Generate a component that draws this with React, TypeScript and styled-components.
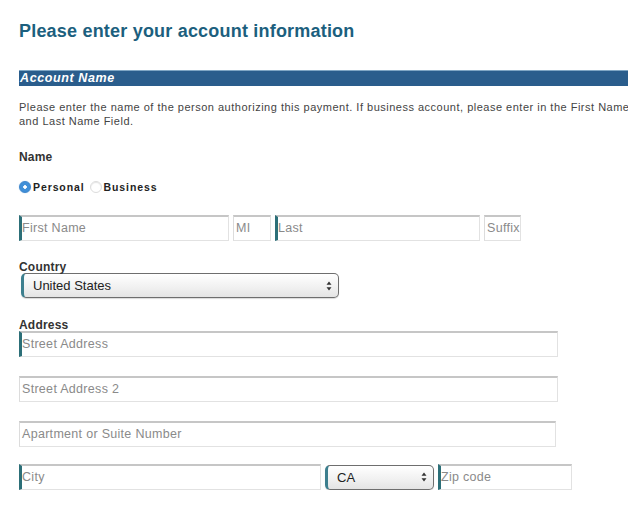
import styled, { createGlobalStyle } from 'styled-components';

const Global = createGlobalStyle`
  html, body {
    margin: 0;
    padding: 0;
    background: #ffffff;
    overflow: hidden;
  }
  body {
    font-family: "Liberation Sans", Arial, sans-serif;
    color: #333333;
  }
`;

const Page = styled.div`
  width: 630px;
  padding: 21px 0 0 19px;
`;

const Heading = styled.h1`
  margin: 0 0 28px;
  height: 21px;
  font-size: 18px;
  line-height: 21px;
  font-weight: bold;
  color: #1c5f7e;
  letter-spacing: 0.2px;
`;

const SectionBar = styled.div`
  height: 15px;
  background: #2a5d8c;
  border-top: 1px solid #7fa6c4;
  color: #ffffff;
  font-size: 12.5px;
  font-weight: bold;
  font-style: italic;
  letter-spacing: 0.6px;
  line-height: 15px;
  padding-left: 1px;
`;

const Intro = styled.p`
  margin: 14px 0 0;
  font-size: 11px;
  line-height: 14px;
  letter-spacing: 0.5px;
  color: #444444;
`;

const Label = styled.div<{ $top: number }>`
  margin-top: ${(p) => p.$top}px;
  font-size: 12px;
  font-weight: bold;
  color: #333333;
  line-height: 12px;
  letter-spacing: 0.2px;
`;

const RadioRow = styled.div`
  margin-top: 18px;
  display: flex;
  align-items: center;
  gap: 2px;
  font-size: 10.5px;
  font-weight: bold;
  color: #222222;
  letter-spacing: 0.9px;
`;

const Radio = styled.span<{ $on?: boolean }>`
  width: 12px;
  height: 12px;
  border-radius: 50%;
  box-sizing: border-box;
  margin-left: ${(p) => (p.$on ? 0 : 3)}px;
  background: ${(p) =>
    p.$on ? 'radial-gradient(circle, #ffffff 0 1.5px, #3f8fd8 2px)' : '#ffffff'};
  border: 1px solid ${(p) => (p.$on ? '#3a84cc' : '#dcdcdc')};
  box-shadow: ${(p) => (p.$on ? '0 0 1px #7ab0e0' : 'inset 0 1px 1px #e6e6e6')};
`;

const Row = styled.div<{ $top: number }>`
  display: flex;
  gap: 4px;
  margin-top: ${(p) => p.$top}px;
  align-items: center;
`;

const Field = styled.div<{ $w: number; $accent?: boolean }>`
  width: ${(p) => p.$w}px;
  height: 26px;
  box-sizing: border-box;
  border: 1px solid #e2e2e2;
  border-top: 2px solid #c6c6c6;
  border-left: ${(p) => (p.$accent ? '3px solid #2c6f78' : '1px solid #dcdcdc')};
  font-size: 12.5px;
  letter-spacing: 0.3px;
  color: #8a8a8a;
  display: flex;
  align-items: center;
  padding-left: ${(p) => (p.$accent ? 0 : 2)}px;
  padding-bottom: 1px;
  background: #ffffff;
  white-space: nowrap;
  overflow: hidden;
`;

const Select = styled.div<{ $w: number }>`
  width: ${(p) => p.$w}px;
  height: 25px;
  box-sizing: border-box;
  border: 1px solid #6e6e6e;
  border-left: 3px solid #3d7f8e;
  border-radius: 5px;
  background: linear-gradient(#ffffff, #f0f0f0 60%, #e4e4e4);
  box-shadow: 0 1px 1px rgba(0, 0, 0, 0.15);
  display: flex;
  align-items: center;
  justify-content: space-between;
  padding: 0 6px 0 9px;
  font-size: 13px;
  color: #222222;
`;

const Arrows = styled.svg`
  width: 6px;
  height: 10px;
`;

const SelectRow = styled.div`
  margin-top: 0;
  margin-left: 2px;
`;

function Updown() {
  return (
    <Arrows viewBox="0 0 6 10">
      <path d="M3 0.5 L5.5 3.8 H0.5 Z M3 9.5 L5.5 6.2 H0.5 Z" fill="#333" />
    </Arrows>
  );
}

export default function App() {
  return (
    <>
      <Global />
      <Page>
        <Heading>Please enter your account information</Heading>
        <SectionBar>Account Name</SectionBar>
        <Intro>
          Please enter the name of the person authorizing this payment. If business account, please
          enter in the First Name and Last Name Field.
        </Intro>
        <Label $top={23}>Name</Label>
        <RadioRow>
          <Radio $on />
          Personal
          <Radio />
          Business
        </RadioRow>
        <Row $top={22}>
          <Field $w={210} $accent>First Name</Field>
          <Field $w={38}>MI</Field>
          <Field $w={205} $accent>Last</Field>
          <Field $w={37}>Suffix</Field>
        </Row>
        <Label $top={20}>Country</Label>
        <SelectRow>
          <Select $w={318}>
            United States
            <Updown />
          </Select>
        </SelectRow>
        <Label $top={21}>Address</Label>
        <Row $top={0}>
          <Field $w={539} $accent>Street Address</Field>
        </Row>
        <Row $top={19}>
          <Field $w={539}>Street Address 2</Field>
        </Row>
        <Row $top={19}>
          <Field $w={537}>Apartment or Suite Number</Field>
        </Row>
        <Row $top={17}>
          <Field $w={302} $accent>City</Field>
          <Select $w={109}>
            CA
            <Updown />
          </Select>
          <Field $w={134} $accent>Zip code</Field>
        </Row>
      </Page>
    </>
  );
}
